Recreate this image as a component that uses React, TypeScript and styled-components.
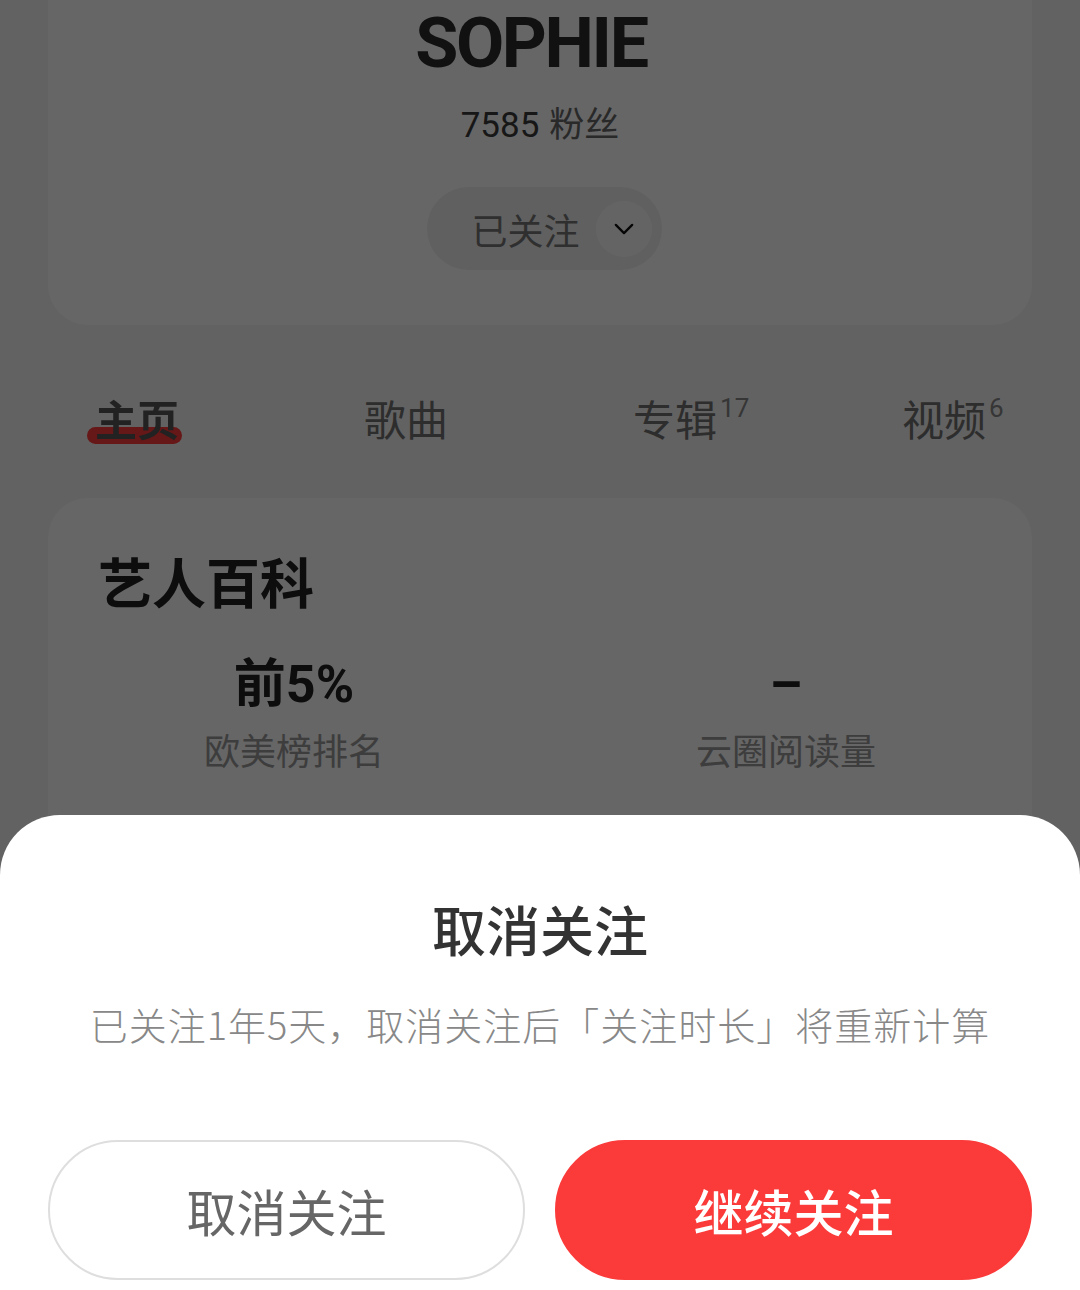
import React from "react";
import styled, { createGlobalStyle } from "styled-components";

const GlobalStyle = createGlobalStyle`
  html, body {
    margin: 0;
    padding: 0;
    background: #f5f5f5;
  }
  body {
    font-family: "Roboto", "Noto Sans CJK SC", sans-serif;
  }
`;

const Page = styled.div`
  width: 1080px;
  height: 1290px;
  overflow: hidden;
  background: #f5f5f5;
`;

// Profile header card (top cut off by the scroll position)
const ProfileCard = styled.div`
  margin: 0 48px;
  height: 325px;
  box-sizing: border-box;
  padding-top: 8px;
  background: #ffffff;
  border-radius: 0 0 40px 40px;
  display: flex;
  flex-direction: column;
  align-items: center;
`;

const ArtistName = styled.h1`
  margin: 0 18px 0 0;
  font-family: "Roboto", sans-serif;
  font-size: 70px;
  line-height: 70px;
  font-weight: 700;
  letter-spacing: -2.4px;
  color: #2b2b2b;
`;

const Fans = styled.div`
  margin-top: 24px;
  font-size: 35px;
  line-height: 40px;
  color: #3a3a3a;

  span {
    margin-left: 10px;
    font-family: "Noto Sans CJK SC", sans-serif;
    color: #666;
  }
`;

const FollowPill = styled.div`
  margin: 41px 0 0 8px;
  height: 83px;
  width: 235px;
  box-sizing: border-box;
  padding: 0 10px 0 45px;
  border-radius: 42px;
  background: #f0f0f0;
  display: flex;
  align-items: center;
  justify-content: space-between;
  font-family: "Noto Sans CJK SC", sans-serif;
  font-size: 36px;
  color: #777;
`;

const ChevronCircle = styled.div`
  width: 56px;
  height: 56px;
  border-radius: 50%;
  background: #fbfbfb;
  display: flex;
  align-items: center;
  justify-content: center;
`;

const TabBar = styled.div`
  display: grid;
  grid-template-columns: repeat(4, 269px);
  padding: 72px 0 0 95px;
`;

const Tab = styled.div<{ $active?: boolean }>`
  position: relative;
  justify-self: start;
  font-family: "Noto Sans CJK SC", sans-serif;
  font-size: 42px;
  line-height: 42px;
  font-weight: ${(p) => (p.$active ? 700 : 400)};
  color: ${(p) => (p.$active ? "#222" : "#707070")};

  sup {
    position: relative;
    top: -2px;
    margin-left: 3px;
    font-family: "Roboto", sans-serif;
    font-size: 26px;
    font-weight: 400;
    vertical-align: top;
    line-height: 26px;
    color: #888;
  }
`;

const TabLabel = styled.span`
  position: relative;
  z-index: 1;
`;

const ActiveBar = styled.div`
  position: absolute;
  left: -8px;
  right: -3px;
  top: 30px;
  height: 17px;
  border-radius: 9px;
  background: #ff3a3a;
`;

const WikiCard = styled.div`
  margin: 59px 48px 0;
  height: 900px;
  padding-top: 56px;
  box-sizing: border-box;
  background: #ffffff;
  border-radius: 40px;
`;

const WikiTitle = styled.h2`
  margin: 0 0 0 50px;
  font-family: "Noto Sans CJK SC", sans-serif;
  font-size: 54px;
  line-height: 54px;
  font-weight: 700;
  color: #222;
`;

const StatGrid = styled.div`
  margin-top: 50px;
  display: grid;
  grid-template-columns: 1fr 1fr;
`;

const Stat = styled.div`
  display: flex;
  flex-direction: column;
  align-items: center;
`;

const StatValue = styled.div`
  font-family: "Roboto", "Noto Sans CJK SC", sans-serif;
  font-size: 52px;
  line-height: 54px;
  font-weight: 700;
  color: #222;
`;

const StatLabel = styled.div`
  margin-top: 18px;
  font-family: "Noto Sans CJK SC", sans-serif;
  font-size: 36px;
  line-height: 38px;
  color: #999;
`;

// Dim layer + bottom sheet
const Overlay = styled.div`
  position: fixed;
  inset: 0;
  background: rgba(0, 0, 0, 0.6);
`;

const Sheet = styled.div`
  position: fixed;
  left: 0;
  right: 0;
  bottom: 0;
  height: 475px;
  box-sizing: border-box;
  padding-top: 86px;
  background: #ffffff;
  border-radius: 60px 60px 0 0;
  display: flex;
  flex-direction: column;
  align-items: center;
  font-family: "Noto Sans CJK SC", sans-serif;
`;

const SheetTitle = styled.div`
  font-size: 54px;
  line-height: 56px;
  font-weight: 500;
  color: #333;
`;

const SheetText = styled.div`
  margin-top: 46px;
  font-size: 38px;
  line-height: 42px;
  letter-spacing: 1px;
  font-weight: 300;
  color: #888;
`;

const ButtonRow = styled.div`
  margin-top: 95px;
  width: 100%;
  box-sizing: border-box;
  padding: 0 48px;
  display: grid;
  grid-template-columns: 1fr 1fr;
  gap: 30px;
`;

const SheetButton = styled.button<{ $primary?: boolean }>`
  height: 140px;
  border-radius: 70px;
  border: 2px solid ${(p) => (p.$primary ? "#fb3a3a" : "#dedede")};
  background: ${(p) => (p.$primary ? "#fb3a3a" : "#ffffff")};
  color: ${(p) => (p.$primary ? "#ffffff" : "#666")};
  font-family: "Noto Sans CJK SC", sans-serif;
  font-size: 50px;
  font-weight: ${(p) => (p.$primary ? 500 : 400)};
  cursor: pointer;
`;

export default function App() {
  return (
    <Page>
      <GlobalStyle />
      <ProfileCard>
        <ArtistName>SOPHIE</ArtistName>
        <Fans>
          7585<span>粉丝</span>
        </Fans>
        <FollowPill>
          已关注
          <ChevronCircle>
            <svg width="28" height="28" viewBox="0 0 24 24" fill="none">
              <path
                d="M5 8.5l7 7 7-7"
                stroke="#111"
                strokeWidth="2"
                strokeLinecap="round"
                strokeLinejoin="round"
              />
            </svg>
          </ChevronCircle>
        </FollowPill>
      </ProfileCard>

      <TabBar>
        <Tab $active>
          <ActiveBar />
          <TabLabel>主页</TabLabel>
        </Tab>
        <Tab>歌曲</Tab>
        <Tab>
          专辑<sup>17</sup>
        </Tab>
        <Tab>
          视频<sup>6</sup>
        </Tab>
      </TabBar>

      <WikiCard>
        <WikiTitle>艺人百科</WikiTitle>
        <StatGrid>
          <Stat>
            <StatValue>前5%</StatValue>
            <StatLabel>欧美榜排名</StatLabel>
          </Stat>
          <Stat>
            <StatValue>–</StatValue>
            <StatLabel>云圈阅读量</StatLabel>
          </Stat>
        </StatGrid>
      </WikiCard>

      <Overlay />
      <Sheet>
        <SheetTitle>取消关注</SheetTitle>
        <SheetText>已关注1年5天，取消关注后「关注时长」将重新计算</SheetText>
        <ButtonRow>
          <SheetButton>取消关注</SheetButton>
          <SheetButton $primary>继续关注</SheetButton>
        </ButtonRow>
      </Sheet>
    </Page>
  );
}
